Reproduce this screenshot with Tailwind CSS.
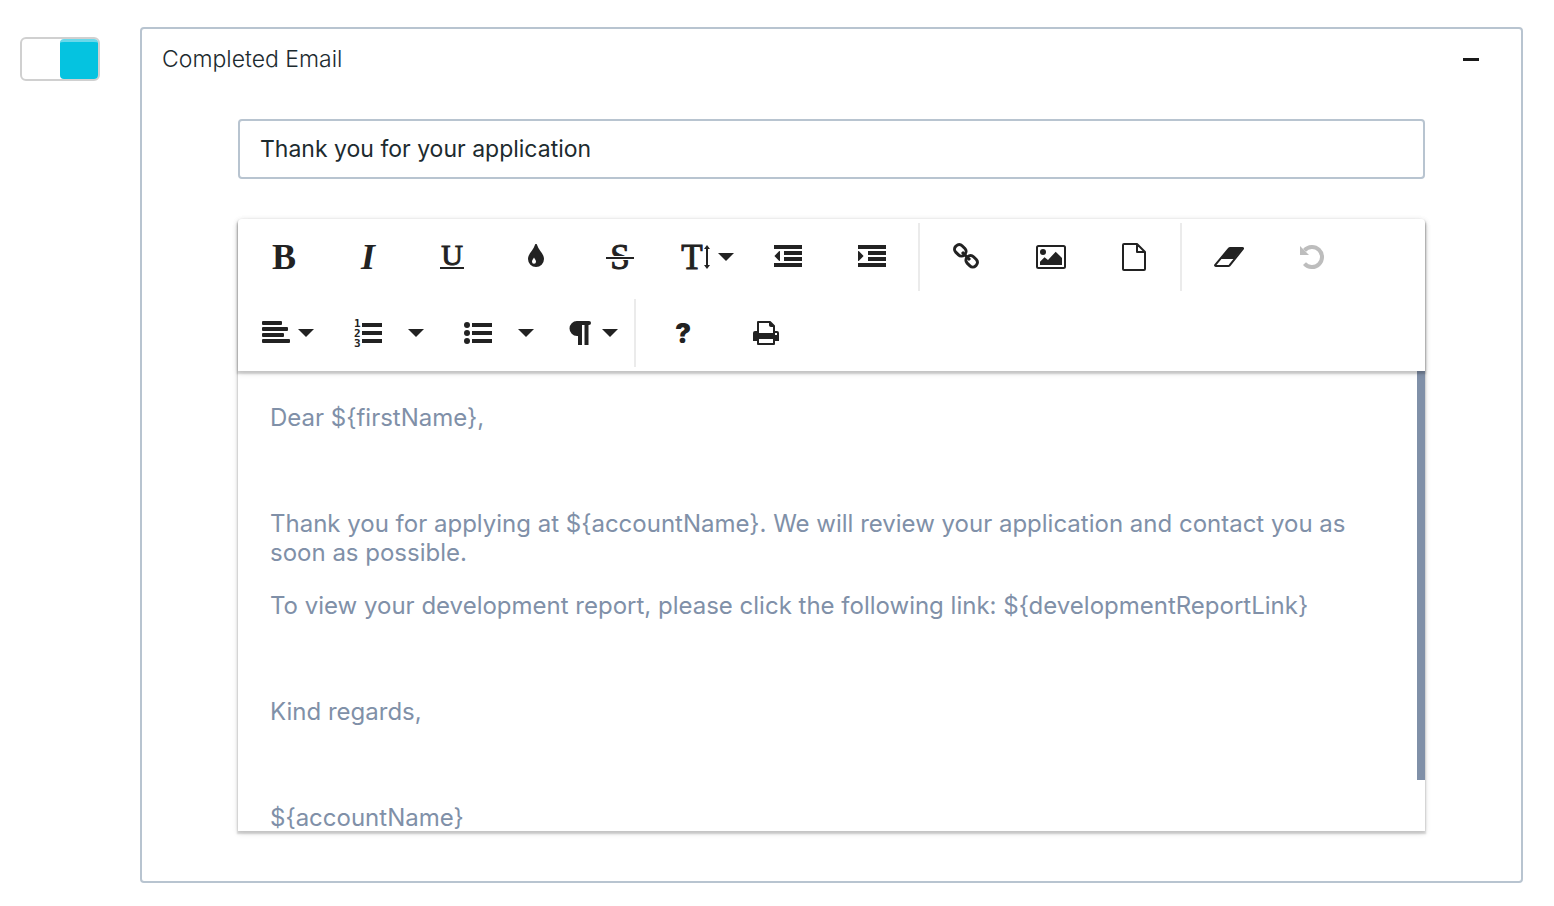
<!DOCTYPE html>
<html lang="en">
<head>
  <meta charset="UTF-8">
  <meta name="viewport" content="width=device-width, initial-scale=1.0">
  <title>Completed Email</title>
  <script src="https://cdn.jsdelivr.net/npm/@tailwindcss/browser@4"></script>
</head>
<body class="bg-white font-['Inter',sans-serif] text-[#1d2b2f]">

  <main class="flex items-start gap-10 pt-[27px] pb-6 pl-5 pr-[31px]">

    <!-- Enable / disable -->
    <input type="checkbox" id="enabled" checked aria-label="Enable completed email" class="mt-2.5 flex h-11 w-20 shrink-0 cursor-pointer appearance-none rounded-md border-2 border-[#d0d0d0] bg-white before:h-full before:w-[38px] before:rounded before:border-t-3 before:border-[#69d8ea] before:bg-[#05c3e0] before:content-[''] checked:justify-end">

    <section class="min-w-0 flex-1 rounded border-2 border-[#b8c4d0]">
      <header class="flex h-15 items-center justify-between pl-5 pr-8">
        <h1 class="text-[23px] font-light">Completed Email</h1>
        <button type="button" id="collapse" aria-label="Collapse" aria-expanded="true" class="flex h-9 w-9 items-center justify-center">
          <span class="h-[3px] w-4 bg-[#1a1a1a]"></span>
        </button>
      </header>

      <div id="panelBody" class="px-24 pt-[30px] pb-[50px]">
        <input type="text" id="subject" aria-label="Subject" value="Thank you for your application" class="h-15 w-full rounded border-2 border-[#b8c4d0] px-5 text-[23px] focus:outline-none">

        <!-- Editor -->
        <div class="mt-10 rounded-t shadow-[0_2px_6px_rgba(0,0,0,0.12),0_2px_2px_1px_rgba(0,0,0,0.16)]">
          <div role="toolbar" aria-label="Formatting" class="relative z-10 flex flex-wrap rounded-t bg-white px-1 text-[#222] shadow-[0_2px_6px_rgba(0,0,0,0.12),0_2px_2px_1px_rgba(0,0,0,0.16)]">
            <button type="button" aria-label="Bold" class="mx-1 flex h-19 w-19 items-center justify-center">
              <svg class="h-8 w-8 overflow-visible" viewBox="0 0 32 32" fill="currentColor"><text x="16" y="28" text-anchor="middle" font-family="Liberation Serif" font-weight="700" font-size="36">B</text></svg>
            </button>
            <button type="button" aria-label="Italic" class="mx-1 flex h-19 w-19 items-center justify-center">
              <svg class="h-8 w-8 overflow-visible" viewBox="0 0 32 32" fill="currentColor"><text x="16" y="28" text-anchor="middle" font-family="Liberation Serif" font-weight="700" font-style="italic" font-size="36">I</text></svg>
            </button>
            <button type="button" aria-label="Underline" class="mx-1 flex h-19 w-19 items-center justify-center">
              <svg class="h-8 w-8 overflow-visible" viewBox="0 0 32 32" fill="currentColor"><text x="16" y="24" text-anchor="middle" font-family="Liberation Serif" font-size="30" stroke="currentColor">U</text><path d="M4 26h24v2H4z"/></svg>
            </button>
            <button type="button" aria-label="Colors" class="mx-1 flex h-19 w-19 items-center justify-center">
              <svg class="h-8 w-8" viewBox="0 0 32 32" fill="currentColor" fill-rule="evenodd"><path d="M16 3c.7 0 1 .5 1.200 1.200C18.500 9 24 12.500 24 18a8 8 0 0 1-16 0C8 12.500 13.500 9 14.800 4.200 15 3.500 15.300 3 16 3zM14 16.500c-.6 1.500-2 2.300-2 4.200a2 2 0 0 0 4 0c0-1.900-1.400-2.700-2-4.200z"/></svg>
            </button>
            <button type="button" aria-label="Strikethrough" class="mx-1 flex h-19 w-19 items-center justify-center">
              <svg class="h-8 w-8 overflow-visible" viewBox="0 0 32 32" fill="currentColor"><text x="16" y="28" text-anchor="middle" font-family="Liberation Serif" font-size="35" stroke="currentColor">S</text><path d="M2 15h28v4H2z" fill="#fff"/><path d="M2 16h28v2H2z"/></svg>
            </button>
            <button type="button" aria-label="Font size" class="mx-1 flex h-19 w-19 items-center gap-2 pl-4">
              <svg class="h-8 w-7 overflow-visible" viewBox="0 0 28 32" fill="currentColor"><text x="10" y="28" text-anchor="middle" font-family="Liberation Serif" font-size="35" stroke="currentColor">T</text><path d="M25 4l3 4h-2v16h2l-3 4-3-4h2V8h-2z"/></svg>
              <svg class="h-2 w-4" viewBox="0 0 16 8" fill="currentColor"><path d="M0 0h16L8 8z"/></svg>
            </button>
            <button type="button" aria-label="Decrease indent" class="mx-1 flex h-19 w-19 items-center justify-center">
              <svg class="h-8 w-8" viewBox="0 0 32 32" fill="currentColor"><path d="M2 4h28v4H2zM12 10h18v4H12zM12 16h18v4H12zM2 22h28v4H2zM8 10v10l-1-.2-4.600-4.800L7 10.200z"/></svg>
            </button>
            <button type="button" aria-label="Increase indent" class="mx-1 flex h-19 w-19 items-center justify-center">
              <svg class="h-8 w-8" viewBox="0 0 32 32" fill="currentColor"><path d="M2 4h28v4H2zM12 10h18v4H12zM12 16h18v4H12zM2 22h28v4H2zM2 10v10l1-.2 4.600-4.800L3 10.200z"/></svg>
            </button>
            <span class="m-1 h-17 w-0.5 bg-[#ebebeb]"></span>
            <button type="button" aria-label="Insert link" class="mx-1 flex h-19 w-19 items-center justify-center">
              <svg class="h-8 w-8" viewBox="0 0 32 32" fill="none" stroke="currentColor" stroke-width="3"><rect x="4.300" y="4.800" width="12" height="9" rx="4" transform="rotate(45 10.300 9.300)"/><rect x="15.700" y="15.800" width="12" height="9" rx="4" transform="rotate(45 21.700 20.300)"/><path d="M12 11l8 8"/></svg>
            </button>
            <button type="button" aria-label="Insert image" class="mx-1 flex h-19 w-19 items-center justify-center">
              <svg class="h-8 w-8" viewBox="0 0 32 32" fill="currentColor"><rect x="3" y="5" width="28" height="22" rx="1.500" fill="none" stroke="currentColor" stroke-width="2"/><circle cx="9" cy="11" r="3"/><path d="M6 24v-3.300l4.500-4.400 3.500 2.700 7.700-8.300L28 17v7z"/></svg>
            </button>
            <button type="button" aria-label="Insert file" class="mx-1 flex h-19 w-19 items-center justify-center">
              <svg class="h-8 w-8" viewBox="0 0 32 32" fill="none" stroke="currentColor" stroke-width="2" stroke-linejoin="round"><path d="M6 3h13l8 8v17a1 1 0 0 1-1 1H6a1 1 0 0 1-1-1V4a1 1 0 0 1 1-1zM19 3v8h8"/></svg>
            </button>
            <span class="m-1 h-17 w-0.5 bg-[#ebebeb]"></span>
            <button type="button" aria-label="Clear formatting" class="mx-1 flex h-19 w-19 items-center justify-center">
              <svg class="h-8 w-8" viewBox="0 0 32 32" fill="currentColor"><path d="M18 7h12.500c.6 0 .7.500.3 1L17.500 24.500c-.3.300-.6.500-1 .5H4c-.9 0-1.200-.6-.7-1.200L17 7.500c.3-.3.600-.5 1-.5z" fill="none" stroke="currentColor" stroke-width="2"/><path d="M18 7h13l-9 11H8z"/></svg>
            </button>
            <button type="button" aria-label="Undo" disabled class="mx-1 flex h-19 w-19 items-center justify-center text-[#bdbdbd]">
              <svg class="h-8 w-8" viewBox="0 0 32 32" fill="currentColor"><path d="M8.500 9.400A10 10 0 1 1 8.500 22.600" fill="none" stroke="currentColor" stroke-width="4"/><path d="M4 5l9 9H4z"/></svg>
            </button>
            <button type="button" aria-label="Align" class="mx-1 flex h-19 w-19 items-center gap-2 pl-4">
              <svg class="h-8 w-7" viewBox="0 0 28 32" fill="currentColor"><rect y="4" width="20" height="4" rx="1"/><rect y="10" width="26" height="4" rx="1"/><rect y="16" width="22" height="4" rx="1"/><rect y="22" width="28" height="4" rx="1"/></svg>
              <svg class="h-2 w-4" viewBox="0 0 16 8" fill="currentColor"><path d="M0 0h16L8 8z"/></svg>
            </button>
            <div class="mx-1 flex">
              <button type="button" aria-label="Ordered list" class="flex h-19 w-19 items-center justify-center">
                <svg class="h-8 w-8 overflow-visible" viewBox="0 0 32 32" fill="currentColor"><g font-family="DejaVu Sans Mono" font-weight="700" font-size="11"><text x="2" y="10">1</text><text x="2" y="20">2</text><text x="2" y="30">3</text></g><path d="M10 6h20v4H10zM10 14h20v4H10zM10 22h20v4H10z"/></svg>
              </button>
              <button type="button" aria-label="Ordered list options" class="flex h-19 w-[26px] items-center pl-0.5">
                <svg class="h-2 w-4" viewBox="0 0 16 8" fill="currentColor"><path d="M0 0h16L8 8z"/></svg>
              </button>
            </div>
            <div class="mx-1 flex">
              <button type="button" aria-label="Unordered list" class="flex h-19 w-19 items-center justify-center">
                <svg class="h-8 w-8" viewBox="0 0 32 32" fill="currentColor"><circle cx="5" cy="8" r="3"/><circle cx="5" cy="16" r="3"/><circle cx="5" cy="24" r="3"/><path d="M10 6h20v4H10zM10 14h20v4H10zM10 22h20v4H10z"/></svg>
              </button>
              <button type="button" aria-label="Unordered list options" class="flex h-19 w-[26px] items-center pl-0.5">
                <svg class="h-2 w-4" viewBox="0 0 16 8" fill="currentColor"><path d="M0 0h16L8 8z"/></svg>
              </button>
            </div>
            <button type="button" aria-label="Paragraph format" class="mx-1 flex h-19 w-19 items-center gap-2 pl-4">
              <svg class="h-8 w-7" viewBox="0 0 28 32" fill="none" stroke="currentColor"><path d="M13 5.500h-2a6 6 0 0 0 0 12h2z" fill="currentColor" stroke-width="3"/><path d="M14 5v23M20.500 5v23" stroke-width="4"/><path d="M12 6h11" stroke-width="4" stroke-linecap="round"/></svg>
              <svg class="h-2 w-4" viewBox="0 0 16 8" fill="currentColor"><path d="M0 0h16L8 8z"/></svg>
            </button>
            <span class="m-1 h-17 w-0.5 bg-[#ebebeb]"></span>
            <button type="button" aria-label="Help" class="mx-1 flex h-19 w-19 items-center justify-center">
              <svg class="h-8 w-8 overflow-visible" viewBox="0 0 32 32" fill="currentColor"><text x="17" y="26" text-anchor="middle" font-family="Inter" font-weight="900" font-size="27">?</text></svg>
            </button>
            <button type="button" aria-label="Print" class="mx-1 flex h-19 w-19 items-center justify-center">
              <svg class="h-8 w-8" viewBox="0 0 32 32" fill="currentColor"><path d="M8 16V5h12l4 4v7" fill="none" stroke="currentColor" stroke-width="2" stroke-linejoin="round"/><path d="M19 4l6 6h-4c-1.200 0-2-.8-2-2z"/><path d="M5 14h3v2h16v-2h3a2 2 0 0 1 2 2v8h-4v3a1 1 0 0 1-1 1H8a1 1 0 0 1-1-1v-3H3v-8a2 2 0 0 1 2-2z"/><path d="M9 22h14v4H9zM25 16h2v2h-2z" fill="#fff"/></svg>
            </button>
          </div>

          <div class="relative h-[460px] overflow-hidden">
            <div contenteditable="true" role="textbox" aria-multiline="true" aria-label="Message" class="space-y-6 p-8 text-2xl leading-[29px] text-[#8090a8] focus:outline-none">
              <p>Dear ${firstName},</p>
              <p><br></p>
              <p>Thank you for applying at ${accountName}. We will review your application and contact you as soon as possible.</p>
              <p>To view your development report, please click the following link: ${developmentReportLink}</p>
              <p><br></p>
              <p>Kind regards,</p>
              <p><br></p>
              <p>${accountName}</p>
            </div>
            <!-- scroll thumb -->
            <div class="absolute top-0 right-0 h-[409px] w-2 bg-[#8090a8]"></div>
          </div>
        </div>
      </div>
    </section>
  </main>

  <script>
    const collapse = document.getElementById('collapse');
    collapse.addEventListener('click', () => {
      const hidden = document.getElementById('panelBody').classList.toggle('hidden');
      collapse.setAttribute('aria-expanded', String(!hidden));
    });
  </script>

</body>
</html>
